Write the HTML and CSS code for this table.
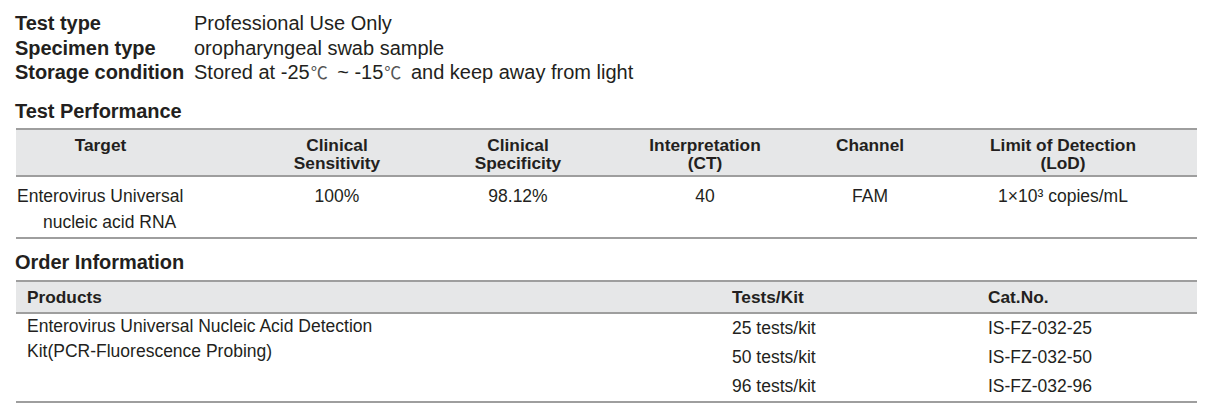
FILE: index.html
```html
<!DOCTYPE html>
<html lang="en">
<head>
<meta charset="utf-8">
<title>Enterovirus Universal Nucleic Acid Detection Kit</title>
<link rel="stylesheet" href="styles.css">
</head>
<body>
<main class="sheet">
  <dl class="info">
    <dt>Test type</dt><dd>Professional Use Only</dd>
    <dt>Specimen type</dt><dd>oropharyngeal swab sample</dd>
    <dt>Storage condition</dt><dd>Stored at -25<span class="deg">℃</span> ~ -15<span class="deg">℃</span> and keep away from light</dd>
  </dl>

  <h2 class="section-title perf-title">Test Performance</h2>
  <table class="perf">
    <colgroup>
      <col class="c1"><col class="c2"><col class="c3"><col class="c4"><col class="c5"><col class="c6">
    </colgroup>
    <thead>
      <tr>
        <th class="target-h">Target</th>
        <th>Clinical<br>Sensitivity</th>
        <th>Clinical<br>Specificity</th>
        <th>Interpretation<br>(CT)</th>
        <th>Channel</th>
        <th>Limit of Detection<br>(LoD)</th>
      </tr>
    </thead>
    <tbody>
      <tr>
        <td class="target"><span class="l1">Enterovirus Universal</span><span class="l2">nucleic acid RNA</span></td>
        <td>100%</td>
        <td>98.12%</td>
        <td>40</td>
        <td>FAM</td>
        <td>1×10³ copies/mL</td>
      </tr>
    </tbody>
  </table>

  <h2 class="section-title order-title">Order Information</h2>
  <table class="order">
    <colgroup>
      <col class="o1"><col class="o2"><col class="o3">
    </colgroup>
    <thead>
      <tr><th>Products</th><th>Tests/Kit</th><th>Cat.No.</th></tr>
    </thead>
    <tbody>
      <tr>
        <td rowspan="3" class="product">Enterovirus Universal Nucleic Acid Detection<br>Kit(PCR-Fluorescence Probing)</td>
        <td>25 tests/kit</td><td>IS-FZ-032-25</td>
      </tr>
      <tr><td>50 tests/kit</td><td>IS-FZ-032-50</td></tr>
      <tr><td>96 tests/kit</td><td>IS-FZ-032-96</td></tr>
    </tbody>
  </table>
</main>
</body>
</html>
```

FILE: styles.css
```css
html, body {
  margin: 0;
  padding: 0;
  background: #ffffff;
}

body {
  font-family: "Liberation Sans", Arial, sans-serif;
  color: #231f20;
}

.sheet {
  width: 1181px;
  padding: 11px 0 0 16px;
}

.info {
  display: grid;
  grid-template-columns: 179px auto;
  margin: 0 0 0 -1px;
  font-size: 20px;
  line-height: 24.5px;
}

.info dt {
  font-weight: bold;
  letter-spacing: -0.05px;
}

.info dd {
  margin: 0;
}

.deg {
  font-family: "Noto Sans CJK SC", sans-serif;
  font-size: 17px;
  color: #555;
  margin: 0 4px 0 1px;
}

.section-title {
  margin: 0 0 0 -1px;
  font-size: 20px;
  line-height: 24.5px;
  font-weight: bold;
  letter-spacing: -0.05px;
}

.perf-title {
  margin-top: 14px;
  margin-bottom: 5px;
}

.order-title {
  margin-top: 11px;
  margin-bottom: 5px;
}

table {
  width: 1181px;
  border-collapse: collapse;
  table-layout: fixed;
  font-size: 17.5px;
  border-bottom: 2px solid #9e9e9e;
}

thead th {
  background: #e6e7e8;
  font-weight: bold;
  font-size: 17.3px;
  border-top: 2px solid #9e9e9e;
  border-bottom: 2px solid #9e9e9e;
}

.perf .c1 { width: 221px; }
.perf .c2 { width: 200px; }
.perf .c3 { width: 162px; }
.perf .c4 { width: 212px; }
.perf .c5 { width: 118px; }
.perf .c6 { width: 268px; }

.perf th {
  text-align: center;
  vertical-align: top;
  line-height: 18px;
  padding: 6px 0 3px;
  height: 36px;
}

.perf th.target-h {
  padding-right: 52px;
}

.perf td {
  text-align: center;
  vertical-align: top;
  line-height: 26px;
  padding: 6px 0 2px;
}

.perf td.target {
  text-align: left;
  padding-left: 1px;
}

.target .l1,
.target .l2 {
  display: block;
  white-space: nowrap;
}

.target .l2 {
  padding-left: 26px;
}

.order .o1 { width: 705px; }
.order .o2 { width: 256px; }
.order .o3 { width: 220px; }

.order th {
  text-align: left;
  padding: 0 0 0 11px;
  height: 30px;
  line-height: 30px;
}

.order td {
  text-align: left;
  padding: 0 0 0 11px;
  line-height: 29px;
  vertical-align: top;
}

.order td.product {
  line-height: 25px;
}
```
